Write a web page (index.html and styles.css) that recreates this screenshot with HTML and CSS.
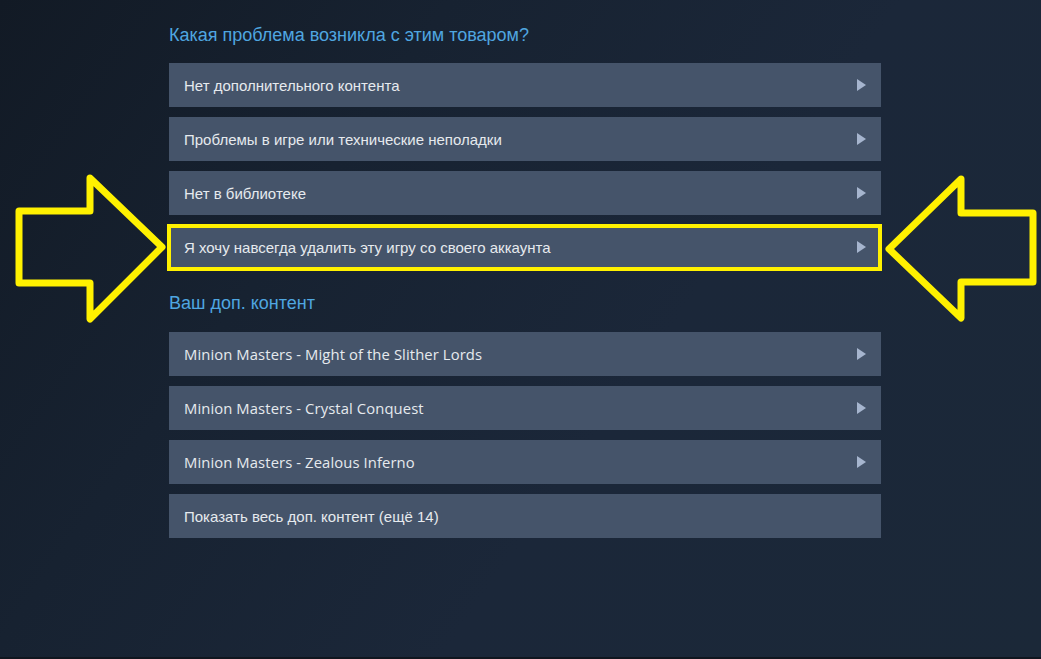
FILE: index.html
```html
<!DOCTYPE html>
<html lang="ru">
<head>
<meta charset="utf-8">
<title>Steam Support</title>
<link rel="stylesheet" href="styles.css">
</head>
<body>
<div class="page">
  <div class="content">
    <h2 class="heading first">Какая проблема возникла с этим товаром?</h2>
    <div class="list">
      <div class="row"><span class="label ru">Нет дополнительного контента</span><span class="tri"></span></div>
      <div class="row"><span class="label ru">Проблемы в игре или технические неполадки</span><span class="tri"></span></div>
      <div class="row"><span class="label ru">Нет в библиотеке</span><span class="tri"></span></div>
      <div class="row highlighted"><span class="label ru">Я хочу навсегда удалить эту игру со своего аккаунта</span><span class="tri"></span></div>
    </div>
    <h2 class="heading second">Ваш доп. контент</h2>
    <div class="list">
      <div class="row"><span class="label en">Minion Masters - Might of the Slither Lords</span><span class="tri"></span></div>
      <div class="row"><span class="label en">Minion Masters - Crystal Conquest</span><span class="tri"></span></div>
      <div class="row"><span class="label en">Minion Masters - Zealous Inferno</span><span class="tri"></span></div>
      <div class="row"><span class="label ru">Показать весь доп. контент (ещё 14)</span></div>
    </div>
  </div>
  <svg class="arrows" width="1041" height="659" viewBox="0 0 1041 659">
    <polygon points="19,211 90,211 90,178 162,247 90,319 90,283 19,283" />
    <polygon points="1033,213 961,213 961,179 889,249 961,318 961,282 1033,282" />
  </svg>
</div>
</body>
</html>
```
FILE: styles.css
```css
html, body {
  margin: 0;
  padding: 0;
}
body {
  width: 1041px;
  height: 659px;
  overflow: hidden;
  background: linear-gradient(125deg, #121a25 0%, #172231 30%, #1b2739 60%, #1b2838 100%);
  font-family: "Liberation Sans", Arial, sans-serif;
}
.page {
  position: relative;
  width: 1041px;
  height: 657px;
  border-bottom: 2px solid #10161f;
}
.content {
  margin-left: 169px;
  width: 712px;
  padding-top: 24px;
}
.heading {
  margin: 0;
  font-weight: normal;
  font-size: 18px;
  line-height: 22px;
  color: #4fa6e0;
}
.heading.first {
  margin-bottom: 17px;
}
.heading.second {
  margin-top: 23px;
  margin-bottom: 18px;
}
.list {
  display: flex;
  flex-direction: column;
  gap: 10px;
}
.row {
  position: relative;
  height: 44px;
  display: flex;
  align-items: center;
  justify-content: space-between;
  padding: 0 15px;
  background: #45546a;
}
.label {
  font-size: 15px;
  color: #e6eaee;
}
.label.en {
  font-family: "Open Sans", "Liberation Sans", sans-serif;
  font-size: 14.8px;
  letter-spacing: 0.1px;
}
.tri {
  width: 0;
  height: 0;
  border-top: 6px solid transparent;
  border-bottom: 6px solid transparent;
  border-left: 9px solid #a6b5ce;
}
.highlighted::after {
  content: "";
  position: absolute;
  left: -2px;
  top: -1px;
  right: -1px;
  bottom: -2px;
  border: 4px solid #fff100;
}
.arrows {
  position: absolute;
  left: 0;
  top: 0;
  pointer-events: none;
}
.arrows polygon {
  fill: none;
  stroke: #fff100;
  stroke-width: 7;
  stroke-linejoin: round;
}
```
